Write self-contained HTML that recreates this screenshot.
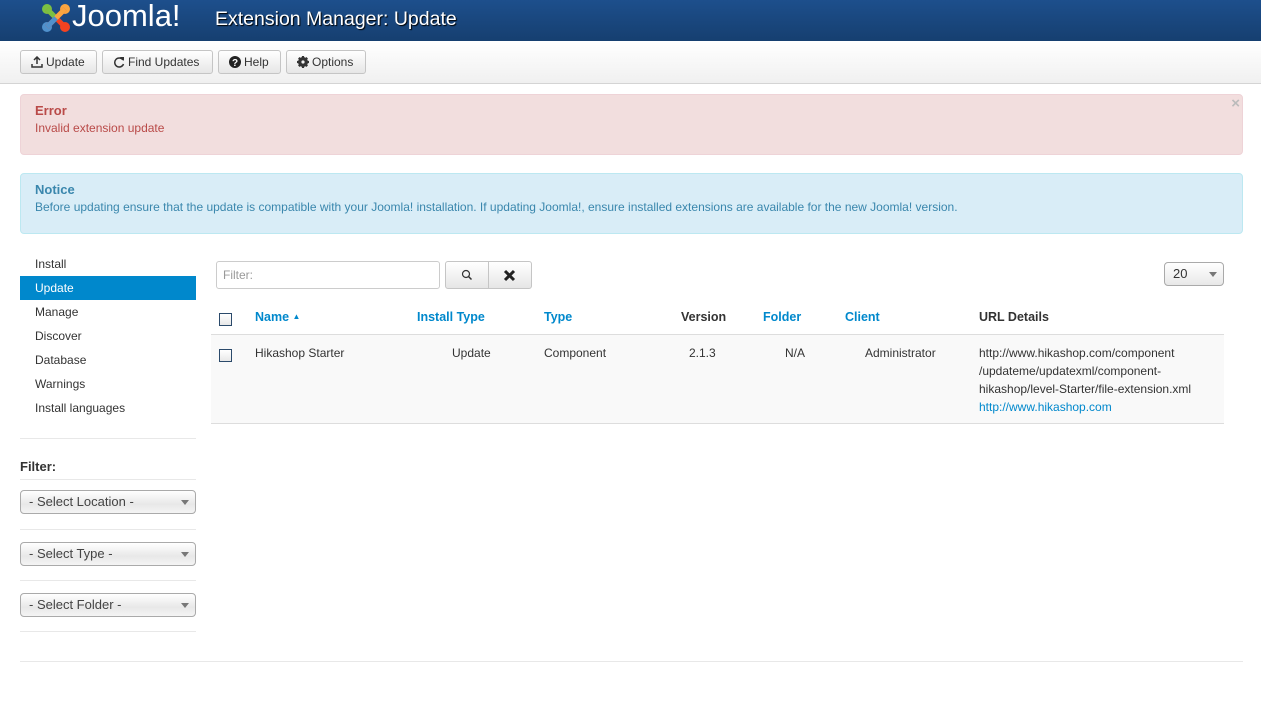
<!DOCTYPE html>
<html><head><meta charset="utf-8"><style>
*{box-sizing:border-box}
body{margin:0;width:1261px;height:710px;background:#fff;font-family:"Liberation Sans",Arial,sans-serif;font-size:12px;color:#333;position:relative;overflow:hidden}
.hdr{position:absolute;left:0;top:0;width:1261px;height:41px;background:linear-gradient(#1d4f8c,#163f70);}
.logo{position:absolute;left:40px;top:0px;width:150px;height:38px}
.logo .j{position:absolute;left:32px;top:-2px;color:#fff;font-size:31px;font-family:"Liberation Sans",sans-serif}
.title{position:absolute;left:215px;top:8px;color:#fff;font-size:19.5px;text-shadow:1px 1px 1px #000}
.tb{position:absolute;left:0;top:41px;width:1261px;height:43px;background:linear-gradient(#fff,#f0f0f0);border-bottom:1px solid #d4d4d4}
.btn{position:absolute;top:9px;height:24px;border:1px solid #c5c5c5;border-radius:3px;background:linear-gradient(#fff,#e6e6e6);font-size:12px;line-height:22px;padding:0 10px;color:#333;white-space:nowrap}
.btn svg{vertical-align:-2px;margin-right:3px}
.alert{position:absolute;left:20px;width:1223px;border-radius:4px;padding:8px 14px}
.alert b{display:block;font-size:13px;margin-bottom:3px}
.side a{position:absolute;left:20px;width:176px;height:24px;line-height:24px;padding-left:15px;color:#333;font-size:12px}
.hr{position:absolute;height:1px;background:#e8e8e8}
.sel{position:absolute;left:20px;width:176px;height:24px;border:1px solid #aaa;border-radius:4px;background:linear-gradient(#fff,#e8e8e8 60%,#f4f4f4);line-height:22px;padding-left:8px;font-size:13px;color:#444}
.sel:after{content:"";position:absolute;right:6px;top:9px;border:4px solid transparent;border-top:5px solid #777}
.th{position:absolute;top:310px;font-weight:bold;font-size:12.5px;color:#0088cc}
.cb{position:absolute;width:13px;height:13px;border:1px solid #2b4a6b;background:linear-gradient(#fff,#e8e8e8)}
.td{position:absolute;top:346px;font-size:12px;color:#333}
</style></head><body>
<div class="hdr">
 <div class="logo">
  <svg style="position:absolute;left:0;top:3px" width="32" height="30" viewBox="0 0 32 30">
   <circle cx="7" cy="6" r="5" fill="#7ac143"/><circle cx="25" cy="6" r="5" fill="#f9a541"/>
   <circle cx="7" cy="24" r="5" fill="#5091cd"/><circle cx="25" cy="24" r="5" fill="#f44321"/>
   <path d="M7 6 L25 24 M25 6 L7 24" stroke="#f44321" stroke-width="5"/>
   <path d="M7 6 L16 15" stroke="#7ac143" stroke-width="5"/><path d="M25 6 L16 15" stroke="#f9a541" stroke-width="5"/>
   <path d="M7 24 L16 15" stroke="#5091cd" stroke-width="5"/>
  </svg>
  <span class="j">Joomla!</span>
 </div>
 <div class="title">Extension Manager: Update</div>
</div>
<div class="tb">
 <div class="btn" style="left:20px;width:77px"><svg width="12" height="12"><path d="M6 1 L6 8 M3 4 L6 1 L9 4 M1 8 L1 11 L11 11 L11 8" stroke="#333" stroke-width="1.5" fill="none"/></svg>Update</div>
 <div class="btn" style="left:102px;width:111px"><svg width="12" height="12"><path d="M10 4 A4.5 4.5 0 1 0 10.5 8" stroke="#333" stroke-width="1.5" fill="none"/><path d="M7 1 L11 1 L11 5 Z" fill="#333"/></svg>Find Updates</div>
 <div class="btn" style="left:218px;width:63px"><svg width="12" height="12"><circle cx="6" cy="6" r="6" fill="#222"/><text x="6" y="10" font-size="10" font-weight="bold" fill="#fff" text-anchor="middle" font-family="Liberation Sans">?</text></svg>Help</div>
 <div class="btn" style="left:286px;width:80px"><svg width="12" height="12"><circle cx="6" cy="6" r="3.8" fill="none" stroke="#333" stroke-width="2.4"/><path d="M6 0 V12 M0 6 H12 M1.8 1.8 L10.2 10.2 M10.2 1.8 L1.8 10.2" stroke="#333" stroke-width="2.2"/><circle cx="6" cy="6" r="1.6" fill="#f2f2f2"/></svg>Options</div>
</div>
<div class="alert" style="top:94px;height:61px;background:#f2dede;border:1px solid #eed3d7;color:#b94a48"><b>Error</b>Invalid extension update<span style="position:absolute;right:2px;top:0;color:#bbb;font-size:15px;font-weight:bold">×</span></div>
<div class="alert" style="top:173px;height:61px;background:#d9edf7;border:1px solid #bce8f1;color:#3a87ad"><b>Notice</b>Before updating ensure that the update is compatible with your Joomla! installation. If updating Joomla!, ensure installed extensions are available for the new Joomla! version.</div>
<div class="side">
 <a style="top:252px">Install</a>
 <a style="top:276px;background:#0088cc;color:#fff">Update</a>
 <a style="top:300px">Manage</a>
 <a style="top:324px">Discover</a>
 <a style="top:348px">Database</a>
 <a style="top:372px">Warnings</a>
 <a style="top:396px">Install languages</a>
</div>
<div class="hr" style="left:20px;top:438px;width:176px"></div>
<div style="position:absolute;left:20px;top:459px;font-weight:bold;font-size:13px">Filter:</div>
<div class="hr" style="left:20px;top:479px;width:176px"></div>
<div class="sel" style="top:490px">- Select Location -</div>
<div class="hr" style="left:20px;top:529px;width:176px"></div>
<div class="sel" style="top:542px">- Select Type -</div>
<div class="hr" style="left:20px;top:580px;width:176px"></div>
<div class="sel" style="top:593px">- Select Folder -</div>
<div class="hr" style="left:20px;top:631px;width:176px"></div>
<div class="hr" style="left:20px;top:661px;width:1223px"></div>

<div style="position:absolute;left:216px;top:261px;width:224px;height:28px;border:1px solid #ccc;border-radius:3px;padding-left:6px;line-height:26px;color:#999">Filter:</div>
<div style="position:absolute;left:445px;top:261px;width:87px;height:28px;border:1px solid #c5c5c5;border-radius:3px;background:linear-gradient(#fff,#e6e6e6)">
 <div style="position:absolute;left:42px;top:0;width:1px;height:26px;background:#c5c5c5"></div>
 <svg style="position:absolute;left:15px;top:7px" width="12" height="12"><circle cx="5" cy="5" r="3.5" fill="none" stroke="#333" stroke-width="1.2"/><path d="M7.5 7.5 L10.5 10.5" stroke="#333" stroke-width="1.5"/></svg>
 <svg style="position:absolute;left:57px;top:7px" width="13" height="13"><path d="M2 2 L11 11 M11 2 L2 11" stroke="#222" stroke-width="3"/></svg>
</div>
<div style="position:absolute;left:1164px;top:262px;width:60px;height:24px;border:1px solid #aaa;border-radius:4px;background:linear-gradient(#fff,#e8e8e8);line-height:22px;padding-left:8px;font-size:13px">20<span style="position:absolute;right:6px;top:9px;border:4px solid transparent;border-top:5px solid #777"></span></div>

<div class="cb" style="left:219px;top:313px"></div>
<div class="th" style="left:255px">Name <span style="font-size:8px;vertical-align:2px">▲</span></div>
<div class="th" style="left:417px">Install Type</div>
<div class="th" style="left:544px">Type</div>
<div class="th" style="left:681px;color:#333">Version</div>
<div class="th" style="left:763px">Folder</div>
<div class="th" style="left:845px">Client</div>
<div class="th" style="left:979px;color:#333">URL Details</div>
<div style="position:absolute;left:211px;top:334px;width:1013px;height:90px;background:#f9f9f9;border-top:1px solid #ddd;border-bottom:1px solid #ddd"></div>
<div class="cb" style="left:219px;top:349px"></div>
<div class="td" style="left:255px">Hikashop Starter</div>
<div class="td" style="left:452px">Update</div>
<div class="td" style="left:544px">Component</div>
<div class="td" style="left:689px">2.1.3</div>
<div class="td" style="left:785px">N/A</div>
<div class="td" style="left:865px">Administrator</div>
<div class="td" style="left:979px;line-height:18px;top:344px">http://www.hikashop.com/component<br>/updateme/updatexml/component-<br>hikashop/level-Starter/file-extension.xml<br><span style="color:#0088cc">http://www.hikashop.com</span></div>
</body></html>
